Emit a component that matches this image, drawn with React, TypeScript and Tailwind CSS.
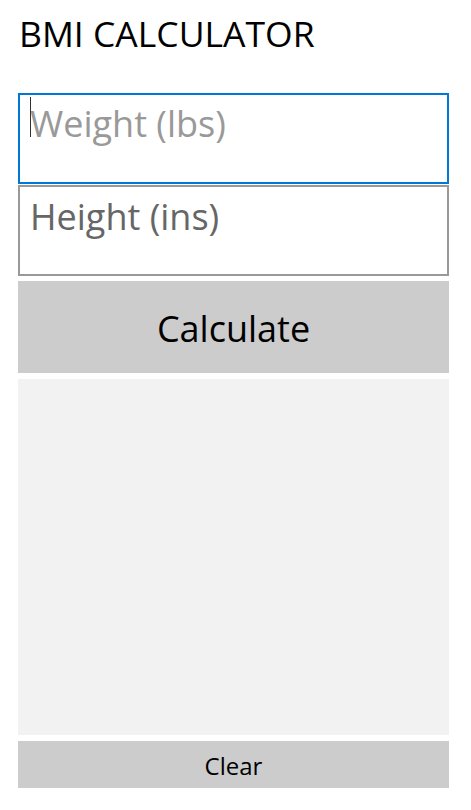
export default function App() {
  const font = { fontFamily: '"Open Sans", "Noto Sans", sans-serif' };
  return (
    <div className="w-[471px] h-[810px] bg-white" style={font}>
      <div className="pl-[18px] w-[449px] flex flex-col">
        <div className="h-[93px] pt-[7px] pl-[1px] text-[35.5px] leading-[52px] text-black">BMI CALCULATOR</div>
        <div className="relative h-[91px] border-2 border-[#0078d7] bg-white">
          <span className="absolute left-[10px] top-[2px] w-px h-[40px] bg-[#333]" />
          <div className="pl-[10px] pt-[5px] text-[36px] leading-[48px] text-[#999]">Weight (lbs)</div>
        </div>
        <div className="mt-[1px] h-[91px] border-2 border-[#999] bg-white">
          <div className="pl-[10px] pt-[6px] text-[36px] leading-[48px] text-[#666]">Height (ins)</div>
        </div>
        <div className="mt-[5px] h-[92px] pt-[3px] bg-[#cccccc] flex items-center justify-center text-[36px] text-black">Calculate</div>
        <div className="mt-[6px] h-[356px] bg-[#f2f2f2]" />
        <div className="mt-[6px] h-[47px] pt-[2px] bg-[#cccccc] flex items-center justify-center text-[24px] text-black">Clear</div>
      </div>
    </div>
  );
}
